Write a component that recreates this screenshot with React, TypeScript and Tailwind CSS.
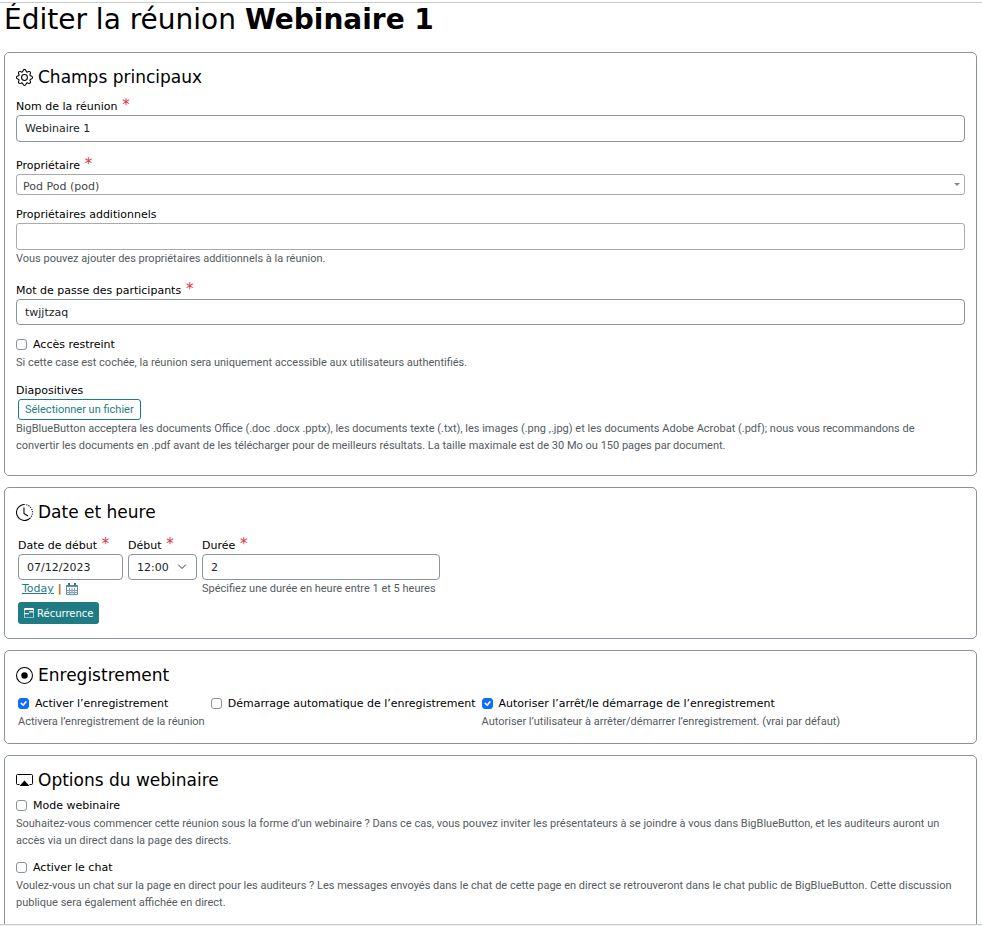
import type { ReactNode } from "react";
import { BsCalendar3Range, BsCheck, BsClockHistory, BsGear, BsRecordCircle } from "react-icons/bs";

function Required() {
  return <span className="text-[15px] leading-[0px] text-[#dc3545]"> *</span>;
}

function Label({ htmlFor, required, children }: { htmlFor: string; required?: boolean; children: ReactNode }) {
  return (
    <label htmlFor={htmlFor} className="block h-[18px] text-[11px] leading-[20px] whitespace-nowrap text-black">
      {children}
      {required && <Required />}
    </label>
  );
}

function Help({ id, children }: { id?: string; children: ReactNode }) {
  return (
    <p id={id} className="font-[Roboto,sans-serif] text-[11px] leading-[17px] text-[#555b61]">
      {children}
    </p>
  );
}

function Check({ id, checked, children }: { id: string; checked?: boolean; children: ReactNode }) {
  return (
    <div className="flex h-[19px] items-center">
      <span className="grid size-[11px] shrink-0 place-items-center">
        <input
          id={id}
          type="checkbox"
          defaultChecked={checked}
          className="peer col-start-1 row-start-1 size-[11px] appearance-none rounded-[3px] border border-[#8a929a] bg-white checked:border-[#0d6efd] checked:bg-[#0d6efd]"
        />
        <BsCheck className="pointer-events-none col-start-1 row-start-1 hidden size-[11px] stroke-1 text-white peer-checked:block" />
      </span>
      <label htmlFor={id} className="pl-[6px] text-[11px] leading-[19px] whitespace-nowrap text-black">
        {children}
      </label>
    </div>
  );
}

function Card({ icon, title, className, children }: { icon: ReactNode; title: string; className: string; children: ReactNode }) {
  return (
    <section className={`rounded-[5px] border border-[#8a929a] px-[11px] pt-3 ${className}`}>
      <h2 className="flex h-6 items-center gap-[5px] text-[17px] leading-6 text-black">
        {icon}
        {title}
      </h2>
      {children}
    </section>
  );
}

function ScreenIcon() {
  return (
    <svg viewBox="0 0 17 17" className="size-[17px]" fill="none" stroke="currentColor" aria-hidden="true">
      <path d="M3.500 12.500h-2q-1 0-1-1v-8q0-1 1-1h14q1 0 1 1v8q0 1-1 1h-2" />
      <path d="M8.500 8.500 13.500 14h-10z" fill="currentColor" stroke="none" />
    </svg>
  );
}

function CalendarIcon() {
  return (
    <svg viewBox="0 0 12 12" className="size-3" fill="none" aria-hidden="true">
      <path d="M.5 2.500h11v9H.500z" fill="#fff" stroke="#5b8fa8" />
      <path d="M0 2h12v2H0z" fill="#5b8fa8" />
      <path d="M3 0v3M9 0v3" stroke="#417690" strokeWidth="2" />
      <path d="M3.500 5v6M6 5v6M8.500 5v6M1 7.500h10M1 9.500h10" stroke="#7fa5b8" />
    </svg>
  );
}

const field = "block w-full rounded-[4px] border border-[#8a929a] bg-white px-2 text-[11px] text-[#212529]";

export default function App() {
  return (
    <div className="flex h-screen flex-col overflow-hidden bg-white font-['DejaVu_Sans',Verdana,sans-serif]">
      <main className="mt-[2px] flex min-h-0 flex-1 flex-col overflow-hidden border-y border-[#c8cacc] pr-[5px] pl-1">
        <h1 className="mb-4 h-[33px] shrink-0 text-[28px] leading-[33px] whitespace-nowrap text-black">
          Éditer la réunion <strong className="font-bold">Webinaire 1</strong>
        </h1>
        <form className="flex flex-col gap-[11px] [&>section]:shrink-0">
          <Card icon={<BsGear className="size-[17px]" />} title="Champs principaux" className="pb-[21px]">
            <div className="mt-2">
              <Label htmlFor="name" required>Nom de la réunion</Label>
              <input id="name" type="text" defaultValue="Webinaire 1" className={`h-[27px] ${field}`} />
            </div>
            <div className="mt-[14px]">
              <Label htmlFor="owner" required>Propriétaire</Label>
              <div className="grid items-center">
                <select
                  id="owner"
                  className="col-start-1 row-start-1 h-[21px] w-full appearance-none rounded-[3px] border border-[#aaa] bg-white px-[6px] pt-1 text-[11px] leading-[15px] text-[#444]"
                >
                  <option>Pod Pod (pod)</option>
                </select>
                <svg viewBox="0 0 6 3" className="pointer-events-none col-start-1 row-start-1 mr-[5px] h-[3px] w-[6px] justify-self-end" aria-hidden="true">
                  <path d="M0 0h6L3 3z" fill="#888" />
                </svg>
              </div>
            </div>
            <div className="mt-[10px]">
              <Label htmlFor="additional">Propriétaires additionnels</Label>
              <input
                id="additional"
                type="text"
                aria-describedby="additional-help"
                className="block h-[27px] w-full rounded-[3px] border border-[#aaa] bg-white px-2 text-[11px]"
              />
              <Help id="additional-help">Vous pouvez ajouter des propriétaires additionnels à la réunion.</Help>
            </div>
            <div className="mt-[14px]">
              <Label htmlFor="password" required>Mot de passe des participants</Label>
              <input id="password" type="text" defaultValue="twjjtzaq" className={`h-[26px] ${field}`} />
            </div>
            <div className="mt-[10px]">
              <Check id="restricted">Accès restreint</Check>
              <Help>Si cette case est cochée, la réunion sera uniquement accessible aux utilisateurs authentifiés.</Help>
            </div>
            <div className="mt-[10px] pr-3">
              <Label htmlFor="slides">Diapositives</Label>
              <button
                id="slides"
                type="button"
                className="ml-[2px] block h-[21px] rounded-[3px] border border-[#1f7c85] px-[6px] font-[Roboto,sans-serif] text-[11px] leading-[20px] text-[#1f7c85]"
              >
                Sélectionner un fichier
              </button>
              <Help>
                BigBlueButton acceptera les documents Office (.doc .docx .pptx), les documents texte (.txt), les images (.png ,.jpg) et les documents Adobe Acrobat (.pdf); nous vous recommandons de convertir les documents en .pdf avant de les télécharger pour de meilleurs résultats. La taille maximale est de 30 Mo ou 150 pages par document.
              </Help>
            </div>
          </Card>

          <Card icon={<BsClockHistory className="size-[17px]" />} title="Date et heure" className="pb-[14px]">
            <div className="mt-3 ml-[2px] flex gap-[5px]">
              <div className="w-[105px]">
                <Label htmlFor="date" required>Date de début</Label>
                <input id="date" type="text" defaultValue="07/12/2023" className={`h-[26px] ${field}`} />
                <div className="flex h-[17px] items-center gap-1 pl-1 text-[11px] leading-[17px] text-[#b35c00]">
                  <a href="#today" className="text-[#1f7c85] underline">Today</a>
                  <span className="font-bold">|</span>
                  <a href="#calendar" aria-label="Calendrier"><CalendarIcon /></a>
                </div>
              </div>
              <div className="w-[69px]">
                <Label htmlFor="start" required>Début</Label>
                <div className="grid items-center">
                  <select id="start" className={`col-start-1 row-start-1 h-[26px] appearance-none pt-[2px] ${field}`}>
                    <option>12:00</option>
                  </select>
                  <svg viewBox="0 0 10 6" className="pointer-events-none col-start-1 row-start-1 mr-[10px] h-[6px] w-[10px] justify-self-end" fill="none" aria-hidden="true">
                    <path d="M1.500 1 5 4.500 8.500 1" stroke="#343a40" strokeLinecap="round" />
                  </svg>
                </div>
              </div>
              <div className="min-w-[238px]">
                <Label htmlFor="duration" required>Durée</Label>
                <input id="duration" type="text" defaultValue="2" className={`h-[26px] ${field}`} />
                <Help>Spécifiez une durée en heure entre 1 et 5 heures</Help>
              </div>
            </div>
            <button
              type="button"
              className="mt-[5px] ml-[2px] flex h-[22px] items-center gap-[3px] rounded-[3px] bg-[#1f7c85] px-[6px] text-[10px] text-white"
            >
              <BsCalendar3Range className="size-[10px]" />
              Récurrence
            </button>
          </Card>

          <Card icon={<BsRecordCircle className="size-[17px]" />} title="Enregistrement" className="pb-[13px]">
            <div className="mt-[7px] ml-[2px] flex gap-[6px]">
              <div>
                <Check id="record" checked>Activer l’enregistrement</Check>
                <Help>Activera l’enregistrement de la réunion</Help>
              </div>
              <Check id="autostart">Démarrage automatique de l’enregistrement</Check>
              <div>
                <Check id="allow" checked>Autoriser l’arrêt/le démarrage de l’enregistrement</Check>
                <Help>Autoriser l’utilisateur à arrêter/démarrer l’enregistrement. (vrai par défaut)</Help>
              </div>
            </div>
          </Card>

          <Card icon={<ScreenIcon />} title="Options du webinaire" className="pb-10">
            <div className="mt-1">
              <Check id="webinar">Mode webinaire</Check>
              <Help>
                Souhaitez-vous commencer cette réunion sous la forme d’un webinaire ? Dans ce cas, vous pouvez inviter les présentateurs à se joindre à vous dans BigBlueButton, et les auditeurs auront un accès via un direct dans la page des directs.
              </Help>
            </div>
            <div className="mt-[9px]">
              <Check id="chat">Activer le chat</Check>
              <Help>
                Voulez-vous un chat sur la page en direct pour les auditeurs ? Les messages envoyés dans le chat de cette page en direct se retrouveront dans le chat public de BigBlueButton. Cette discussion publique sera également affichée en direct.
              </Help>
            </div>
          </Card>
        </form>
      </main>
      <footer className="h-px shrink-0 bg-[#f0f0f0]" />
    </div>
  );
}
